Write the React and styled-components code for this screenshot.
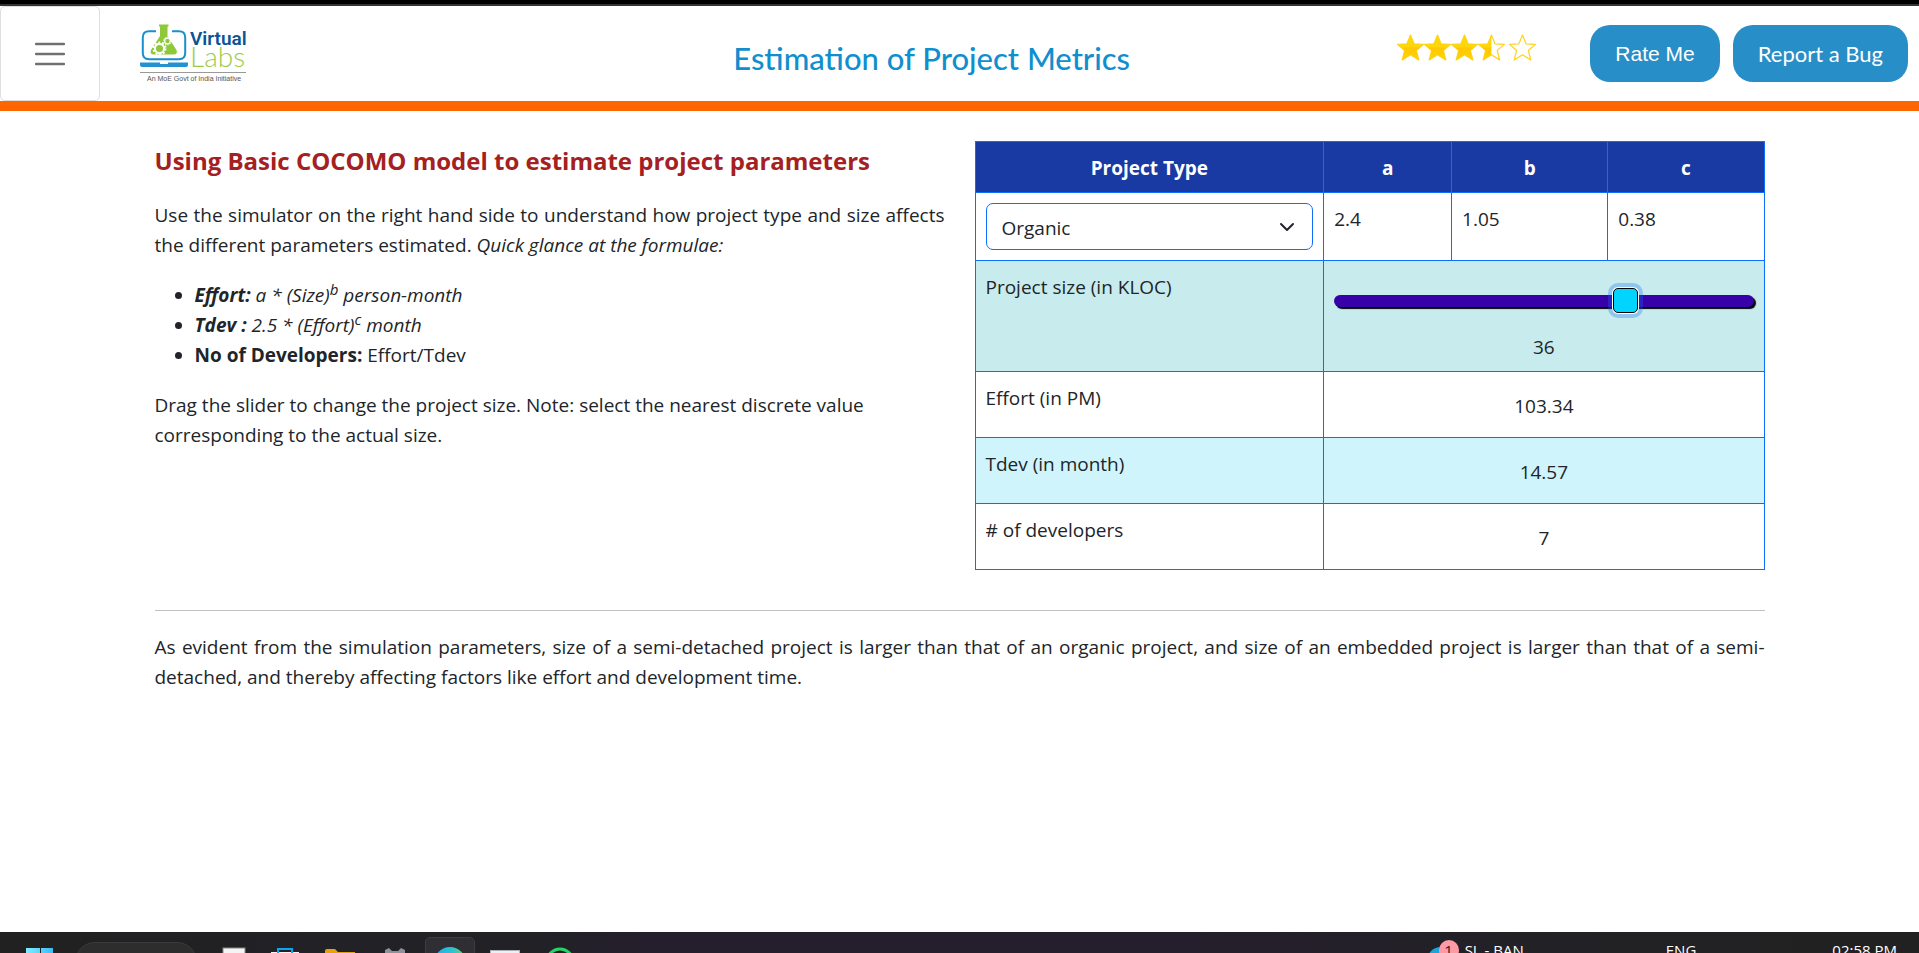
import React, { useState } from "react";
import styled, { createGlobalStyle } from "styled-components";

const GlobalStyle = createGlobalStyle`
  *, *::before, *::after { box-sizing: border-box; }
  body {
    margin: 0;
    background: #fff;
    color: #212529;
    font-family: "Open Sans", "Noto Sans", sans-serif;
    font-size: 19px;
    line-height: 30px;
  }
`;

const Page = styled.div`
  min-height: 100vh;
  display: flex;
  flex-direction: column;
`;

const WindowEdge = styled.div`
  height: 6px;
  background: #000;
  border-bottom: 2px solid #333;
`;

const Header = styled.header`
  display: flex;
  align-items: center;
  height: 105px;
  padding-right: 11px;
  border-bottom: 10px solid #ff6600;
`;

const MenuButton = styled.button`
  display: grid;
  place-items: center;
  width: 100px;
  height: 95px;
  padding: 0;
  background: #fff;
  border: 1px solid #dedede;
  border-radius: 5px;
`;

const Brand = styled.a`
  width: 366px;
  padding-left: 40px;
  display: flex;
`;

const PageTitle = styled.h1`
  flex: 1;
  margin: 0;
  padding-top: 8px;
  text-align: center;
  font-family: Lato, sans-serif;
  font-weight: 500;
  font-size: 31px;
  line-height: 40px;
  color: #0f8fcd;
`;

const Stars = styled.div`
  display: flex;
  padding-bottom: 13px;
  margin-right: 54px;
`;

const Actions = styled.div`
  display: flex;
  gap: 13px;
`;

const ActionButton = styled.button`
  height: 57px;
  padding: 0 25px;
  border: 0;
  border-radius: 20px;
  background: #288ec8;
  color: #fff;
  font-family: ${(p) => (p.$plain ? '"Liberation Sans", Arial' : "Lato")}, sans-serif;
  font-size: ${(p) => (p.$plain ? 21 : 22)}px;
  line-height: 30px;
`;

const Main = styled.main`
  flex: 1;
  width: 100%;
  max-width: 1650px;
  margin: 0 auto;
  padding: 30px 20px;
`;

const Columns = styled.div`
  display: grid;
  grid-template-columns: 1fr 1fr;
  gap: 30px;
`;

const Heading = styled.h2`
  margin: 0 0 24px;
  padding-top: 5px;
  font-size: 24px;
  line-height: 30px;
  font-weight: 700;
  color: #a52020;
`;

const Paragraph = styled.p`
  margin: 0 0 20px;
  text-align: ${(p) => (p.$ragged ? "left" : "justify")};
`;

const Formulae = styled.ul`
  margin: 0 0 20px;
  padding-left: 40px;

  sup {
    font-size: 15px;
    line-height: 0;
  }
`;

const Estimates = styled.table`
  width: 100%;
  table-layout: fixed;
  border-collapse: collapse;
`;

const HeadCell = styled.th`
  height: 51px;
  padding: 11px 10px 9px;
  border: 1px solid #0d6efd;
  background: #1939a3;
  color: #fff;
`;

const Cell = styled.td`
  padding: 11px 10px 9px;
  border: 1px solid #0d6efd;
  vertical-align: top;
  text-align: left;
  font-weight: 400;
`;

const ControlCell = styled(Cell)`
  padding-top: 10px;
`;

const ResultCell = styled(Cell)`
  padding-top: 19px;
  text-align: center;
`;

const Row = styled.tr`
  height: ${(p) => p.$height}px;
  background: ${(p) => p.$tone || "#fff"};
`;

const SelectBox = styled.div`
  display: grid;
  align-items: center;

  & > * { grid-area: 1 / 1; }
  & > svg {
    justify-self: end;
    margin-right: 18px;
    pointer-events: none;
  }
`;

const TypeSelect = styled.select`
  appearance: none;
  width: 100%;
  height: 47px;
  padding: 2px 15px 0;
  border: 1px solid #0d6efd;
  border-radius: 7px;
  background: #fff;
  color: inherit;
  font: inherit;
`;

const Slider = styled.input`
  appearance: none;
  display: block;
  width: 100%;
  height: 30px;
  margin: 15px 0 16px;
  background: transparent;
  outline: none;

  &::-webkit-slider-runnable-track {
    height: 12px;
    border-radius: 7px;
    background: #3700a8;
    box-shadow: 2px 2px 1px #000;
  }
  &::-webkit-slider-thumb {
    appearance: none;
    width: 25px;
    height: 25px;
    margin-top: -7px;
    border: 1px solid #000;
    border-radius: 5px;
    background: #00d4ff;
    box-shadow: 0 0 0 1px #fff, 0 0 0 5px rgba(13, 110, 253, 0.3);
  }
`;

const SliderValue = styled.output`
  display: block;
  text-align: center;
`;

const Rule = styled.hr`
  margin: 40px 0 21px;
  border: 0;
  border-top: 1px solid #c0c2c3;
`;

const Taskbar = styled.footer`
  display: flex;
  justify-content: space-between;
  height: 21px;
  overflow: hidden;
  background: linear-gradient(90deg, #212121 0, #212126 300px, #212126 540px, #251e2c 640px, #251e2c 1200px, #222126 1500px, #212121 100%);
  color: #fff;
  font-size: 15px;
  line-height: 20px;
`;

const TaskGroup = styled.div`
  display: flex;
  align-items: flex-start;
`;

const TaskSlot = styled.div`
  display: flex;
  justify-content: center;
  width: ${(p) => p.$width || 55}px;
`;

const SearchPill = styled.div`
  width: 122px;
  height: 50px;
  margin-top: 10px;
  border: 1px solid #3b3b3b;
  border-radius: 20px;
  background: #2d2d2d;
`;

const ActiveTile = styled.div`
  display: flex;
  justify-content: center;
  width: 50px;
  height: 50px;
  margin-top: 5px;
  border: 1px solid #3d3d41;
  border-radius: 5px;
  background: #2f2f33;
`;

const TrayText = styled.span`
  padding-top: 8px;
  padding-right: ${(p) => p.$after}px;
  white-space: nowrap;
`;

const TrayIcon = styled.span`
  position: relative;
  width: 36px;
  height: 40px;
`;

const Badge = styled.span`
  position: absolute;
  top: 8px;
  left: 10px;
  width: 20px;
  height: 20px;
  border-radius: 10px;
  background: #ff99a4;
  color: #222;
  text-align: center;
`;

const STAR = "M13 1 L16.5 9.5 L25.5 10 L18.6 15.8 L21 25 L13 20 L5 25 L7.4 15.8 L0.5 10 L9.5 9.5 Z";

function Star({ fill }) {
  const id = "star-" + fill;
  return (
    <svg width={fill === 0.5 ? 31 : 27} height="27" viewBox={fill === 0.5 ? "0 0 30 26" : "0 0 26 26"} aria-hidden="true">
      <defs>
        <linearGradient id={id} x1="0" y1="0" x2="0" y2="1">
          <stop offset="0.48" stopColor="#ffd60a" />
          <stop offset="0.52" stopColor="#ffc800" />
          <stop offset="1" stopColor="#ffd400" />
        </linearGradient>
        <clipPath id={id + "-clip"}>
          <rect width={26 * fill} height="26" />
        </clipPath>
      </defs>
      <path d={STAR} fill="#fff" stroke="#ffd21f" strokeWidth="1.2" strokeLinejoin="round" />
      <path d={STAR} fill={`url(#${id})`} clipPath={`url(#${id}-clip)`} />
    </svg>
  );
}

function Gear({ x, y, r }) {
  return (
    <g transform={`translate(${x} ${y})`} fill="none" stroke="#fff">
      <circle r={r} strokeWidth={r * 0.45} />
      <circle r={r * 1.33} strokeWidth={r * 0.4} strokeDasharray={`${r * 0.42} ${r * 0.416}`} />
    </g>
  );
}

function Logo() {
  return (
    <svg width="108" height="60" viewBox="0 0 108 60" role="img" aria-label="Virtual Labs">
      <path d="M16 7.2 H9 Q2.8 7.2 2.8 13.5 V29 Q2.8 35.2 9 35.2 H39 Q45.2 35.2 45.2 29 V13.5 Q45.2 7.2 39 7.2 H32" fill="none" stroke="#1b8fce" strokeWidth="2" />
      <path d="M0 38.5 H20 V40 H28 V38.5 H48 V41 Q48 43 46 43 H2 Q0 43 0 41 Z" fill="#2492cf" />
      <path d="M19 0.5 H28.5 V2.5 H27.5 V12 L36.5 26 Q38 30.5 33.5 30.5 H14 Q9.5 30.5 11 26 L20 12 V2.5 H19 Z" fill="#8fc93a" />
      <Gear x={19.5} y={24.5} r={4.6} />
      <Gear x={27.5} y={17} r={2.8} />
      <text x="50" y="21" fontFamily="Roboto, sans-serif" fontWeight="600" fontSize="19" fill="#0b5496">Virtual</text>
      <text x="50" y="43" fontFamily="Lato, sans-serif" fontWeight="300" fontSize="28" fill="#9bcc4a">Labs</text>
      <path d="M0 48.5 H106" stroke="#999" strokeWidth="1" />
      <text x="7" y="57" fontFamily="'Liberation Sans', sans-serif" fontSize="7" fill="#555">An MoE Govt of India Initiative</text>
    </svg>
  );
}

const MODELS = {
  Organic: { a: 2.4, b: 1.05, c: 0.38 },
  "Semi-detached": { a: 3, b: 1.12, c: 0.35 },
  Embedded: { a: 3.6, b: 1.2, c: 0.32 },
};

function Simulator() {
  const [type, setType] = useState("Organic");
  const [size, setSize] = useState(36);
  const { a, b, c } = MODELS[type];
  const effort = a * Number(Math.pow(size, b).toFixed(2));
  const tdev = 2.5 * Math.pow(effort, c);
  const developers = tdev ? Math.round(effort / tdev) : 0;

  return (
    <Estimates>
      <colgroup>
        <col style={{ width: "44.2%" }} />
        <col style={{ width: "16.2%" }} />
        <col style={{ width: "19.8%" }} />
        <col style={{ width: "19.8%" }} />
      </colgroup>
      <thead>
        <tr>
          <HeadCell scope="col" id="type-label">Project Type</HeadCell>
          <HeadCell scope="col">a</HeadCell>
          <HeadCell scope="col">b</HeadCell>
          <HeadCell scope="col">c</HeadCell>
        </tr>
      </thead>
      <tbody>
        <Row $height={68}>
          <ControlCell>
            <SelectBox>
              <TypeSelect aria-labelledby="type-label" value={type} onChange={(e) => setType(e.target.value)}>
                {Object.keys(MODELS).map((name) => (
                  <option key={name}>{name}</option>
                ))}
              </TypeSelect>
              <svg width="16" height="16" viewBox="0 0 16 16" aria-hidden="true">
                <path d="M2 5 L8 11 L14 5" fill="none" stroke="#212529" strokeWidth="2" strokeLinecap="round" strokeLinejoin="round" />
              </svg>
            </SelectBox>
          </ControlCell>
          <Cell>{a}</Cell>
          <Cell>{b}</Cell>
          <Cell>{c}</Cell>
        </Row>
        <Row $height={111} $tone="#c8ebed">
          <Cell as="th" scope="row"><label htmlFor="size">Project size (in KLOC)</label></Cell>
          <ControlCell colSpan={3}>
            <Slider id="size" type="range" min="0" max="51" value={size} onChange={(e) => setSize(Number(e.target.value))} />
            <SliderValue htmlFor="size">{size}</SliderValue>
          </ControlCell>
        </Row>
        <Row $height={66}>
          <Cell as="th" scope="row">Effort (in PM)</Cell>
          <ResultCell colSpan={3}>{effort.toFixed(2)}</ResultCell>
        </Row>
        <Row $height={66} $tone="#cff4fc">
          <Cell as="th" scope="row">Tdev (in month)</Cell>
          <ResultCell colSpan={3}>{tdev.toFixed(2)}</ResultCell>
        </Row>
        <Row $height={66}>
          <Cell as="th" scope="row"># of developers</Cell>
          <ResultCell colSpan={3}>{developers}</ResultCell>
        </Row>
      </tbody>
    </Estimates>
  );
}

function DesktopTaskbar() {
  return (
    <Taskbar>
      <TaskGroup>
        <TaskSlot $width={75}>
          <svg width="30" height="21" viewBox="0 0 30 21" aria-hidden="true">
            <defs>
              <linearGradient id="start"><stop stopColor="#7df0ff" /><stop offset="1" stopColor="#35b9f5" /></linearGradient>
            </defs>
            <path d="M3 16 H17 V30 H3 Z M18 16 H32 V30 H18 Z" fill="url(#start)" />
          </svg>
        </TaskSlot>
        <SearchPill />
        <TaskSlot $width={65}>
          <svg width="32" height="21" viewBox="0 0 32 21" aria-hidden="true">
            <rect x="9" y="16" width="22" height="14" fill="#f4f4f4" stroke="#888" strokeWidth="1" />
          </svg>
        </TaskSlot>
        <TaskSlot $width={50}>
          <svg width="32" height="21" viewBox="0 0 32 21" aria-hidden="true">
            <rect x="0" y="20" width="28" height="10" fill="#f4f4f4" />
            <path d="M7 21 V17 H21 V21" fill="none" stroke="#0aa5f5" strokeWidth="2" />
          </svg>
        </TaskSlot>
        <TaskSlot>
          <svg width="30" height="21" viewBox="0 0 30 21" aria-hidden="true">
            <path d="M0 30 V19 Q0 17 2 17 H10 L13 20 H30 V30 Z" fill="#e5a209" />
          </svg>
        </TaskSlot>
        <TaskSlot>
          <svg width="22" height="21" viewBox="0 0 22 21" aria-hidden="true">
            <path d="M1 21 V18 L5 16 L8 19 H14 L17 16 L21 18 V21 Z" fill="#8c939d" />
          </svg>
        </TaskSlot>
        <TaskSlot>
          <ActiveTile>
            <svg width="32" height="32" viewBox="0 0 32 32" aria-hidden="true">
              <defs>
                <linearGradient id="edge"><stop offset="0.2" stopColor="#22b5ea" /><stop offset="0.65" stopColor="#35c5c5" /><stop offset="1" stopColor="#6fe052" /></linearGradient>
              </defs>
              <circle cx="16" cy="25" r="16" fill="url(#edge)" />
            </svg>
          </ActiveTile>
        </TaskSlot>
        <TaskSlot>
          <svg width="30" height="21" viewBox="0 0 30 21" aria-hidden="true">
            <rect y="18" width="30" height="12" fill="#aab0b8" />
            <rect x="1" y="19" width="28" height="12" fill="#eceff3" />
          </svg>
        </TaskSlot>
        <TaskSlot>
          <svg width="32" height="21" viewBox="0 0 32 21" aria-hidden="true">
            <circle cx="16" cy="30" r="13" fill="none" stroke="#25d366" strokeWidth="3" />
          </svg>
        </TaskSlot>
      </TaskGroup>
      <TaskGroup>
        <TrayIcon>
          <svg width="30" height="21" viewBox="0 0 30 21" aria-hidden="true">
            <circle cx="12" cy="29" r="14" fill="#1aa6d8" />
          </svg>
          <Badge>1</Badge>
        </TrayIcon>
        <TrayText $after={142}>SL - BAN</TrayText>
        <TrayText $after={136}>ENG</TrayText>
        <TrayText $after={22}>02:58 PM</TrayText>
      </TaskGroup>
    </Taskbar>
  );
}

export default function App() {
  return (
    <Page>
      <GlobalStyle />
      <WindowEdge />
      <Header>
        <MenuButton type="button" aria-label="Menu">
          <svg width="30" height="24" viewBox="0 0 30 24" aria-hidden="true">
            <path d="M1 2 H29 M1 12 H29 M1 22 H29" stroke="#707070" strokeWidth="2.5" strokeLinecap="round" />
          </svg>
        </MenuButton>
        <Brand href="#"><Logo /></Brand>
        <PageTitle>Estimation of Project Metrics</PageTitle>
        <Stars role="img" aria-label="Rated 3.5 out of 5">
          {[1, 1, 1, 0.5, 0].map((fill, i) => <Star key={i} fill={fill} />)}
        </Stars>
        <Actions>
          <ActionButton type="button" $plain>Rate Me</ActionButton>
          <ActionButton type="button">Report a Bug</ActionButton>
        </Actions>
      </Header>
      <Main>
        <Columns>
          <section>
            <Heading>Using Basic COCOMO model to estimate project parameters</Heading>
            <Paragraph>
              Use the simulator on the right hand side to understand how project type and size affects the
              different parameters estimated. <i>Quick glance at the formulae:</i>
            </Paragraph>
            <Formulae>
              <li><i><b>Effort:</b> a * (Size)<sup>b</sup> person-month</i></li>
              <li><i><b>Tdev :</b> 2.5 * (Effort)<sup>c</sup> month</i></li>
              <li><b>No of Developers:</b> Effort/Tdev</li>
            </Formulae>
            <Paragraph $ragged>
              Drag the slider to change the project size. Note: select the nearest discrete value
              corresponding to the actual size.
            </Paragraph>
          </section>
          <Simulator />
        </Columns>
        <Rule />
        <Paragraph>
          As evident from the simulation parameters, size of a semi-detached project is larger than that of an
          organic project, and size of an embedded project is larger than that of a semi-detached, and thereby
          affecting factors like effort and development time.
        </Paragraph>
      </Main>
      <DesktopTaskbar />
    </Page>
  );
}
